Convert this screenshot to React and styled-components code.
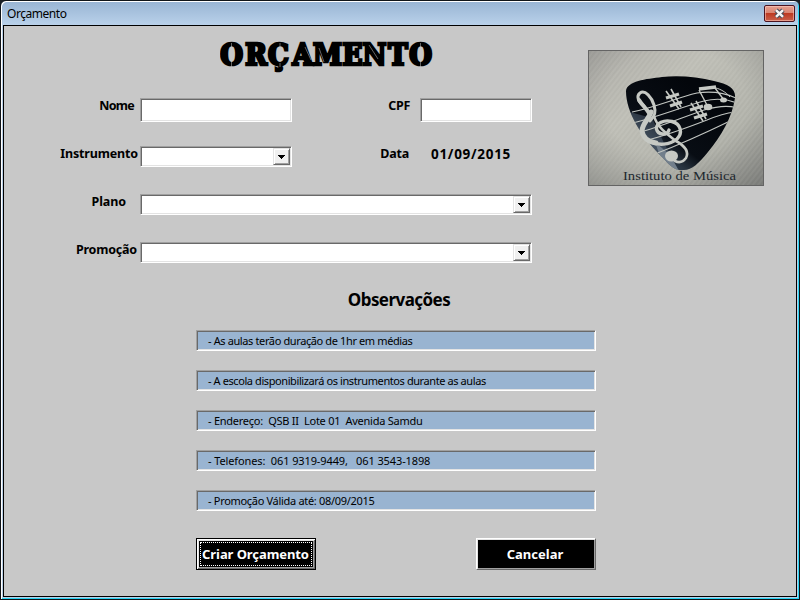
import React from "react";
import styled, { createGlobalStyle, css } from "styled-components";

const GlobalStyle = createGlobalStyle`
  *, *::before, *::after { box-sizing: border-box; }
  body { margin: 0; background: #1a1f24; overflow: hidden; }
`;

const sunken = css`
  border: 1px solid;
  border-color: #a0a0a0 #fff #fff #a0a0a0;
  box-shadow: inset 1px 1px 0 #696969, inset -1px -1px 0 #e3e3e3;
`;

const Window = styled.div`
  width: 800px;
  height: 600px;
  display: flex;
  flex-direction: column;
  padding: 1px 2px 2px 2px;
  border: 1px solid #101418;
  border-radius: 6px 6px 0 0;
  background: linear-gradient(#98b4d3 0, #b9d1ea 24px, #b9d1ea 100%);
  box-shadow: inset 1px 1px 0 #fff, inset -1px -1px 0 #28d4f2;
  font-family: "Noto Sans", sans-serif;
  color: #000;
`;

const TitleBar = styled.header`
  height: 23px;
  display: flex;
  justify-content: space-between;
  padding: 3px 2px 0 4px;
`;

const WindowTitle = styled.span`
  font-size: 12px;
  line-height: 17px;
  letter-spacing: -0.45px;
`;

const CloseButton = styled.button`
  width: 31px;
  height: 17px;
  padding: 0;
  display: flex;
  align-items: center;
  justify-content: center;
  border: 1px solid #4b1420;
  border-radius: 2px;
  background: linear-gradient(#e5a090 0, #d98370 48%, #bd3a22 50%, #c9604b 100%);
  box-shadow: inset 0 0 0 1px rgba(255, 205, 195, 0.55);
`;

const Client = styled.main`
  height: 572px;
  display: flex;
  flex-direction: column;
  border: 1px solid #000;
  background: #c8c8c8;
`;

const Top = styled.div`
  display: flex;
  height: 262px;
`;

const FormColumn = styled.div`
  width: 584px;
`;

const Heading = styled.h1`
  width: 214px;
  height: 72px;
  margin: 0 0 0 216px;

  svg { display: block; }

  text {
    font: 700 29px "DejaVu Serif", serif;
    font-stretch: condensed;
    text-anchor: middle;
    stroke: #000;
    stroke-width: 2.7px;
  }
`;

const FormRow = styled.div`
  display: flex;
  height: 48px;
  align-items: flex-start;
`;

const Label = styled.label`
  width: ${(p) => p.$width}px;
  padding-right: ${(p) => p.$gap}px;
  display: flex;
  justify-content: flex-end;
  font-size: 12.5px;
  line-height: 15px;
  font-weight: 700;
  letter-spacing: ${(p) => p.$track || 0}px;
  white-space: nowrap;
`;

const Input = styled.input`
  ${sunken}
  width: ${(p) => p.$width}px;
  height: 24px;
  padding: 2px 4px;
  border-radius: 0;
  background: #fff;
  font: inherit;
  outline: 0;
`;

const SelectBox = styled.div`
  ${sunken}
  display: flex;
  justify-content: flex-end;
  width: ${(p) => p.$width}px;
  height: 21px;
  padding: 1px;
  background: #fff;
`;

const Arrow = styled.button`
  width: 17px;
  height: 17px;
  padding: 1px 0 0;
  display: flex;
  align-items: center;
  justify-content: center;
  border: 1px solid;
  border-color: #e3e3e3 #696969 #696969 #e3e3e3;
  background: #f0f0f0;
  box-shadow: inset 1px 1px 0 #fff, inset -1px -1px 0 #a0a0a0;
`;

const DateValue = styled.span`
  margin-left: 22px;
  font-size: 13.5px;
  line-height: 17px;
  font-weight: 700;
  letter-spacing: 0.7px;
`;

const Picture = styled.figure`
  width: 176px;
  height: 136px;
  margin: 24px 0 0;
  border: 1px solid #646464;
  overflow: hidden;

  svg { display: block; }
`;

const Notes = styled.section`
  width: 400px;
  margin-left: 192px;
`;

const NotesTitle = styled.h2`
  height: 42px;
  margin: 0;
  padding-left: 6px;
  text-align: center;
  font-size: 17px;
  line-height: 24px;
  letter-spacing: -0.55px;
`;

const Note = styled.div`
  ${sunken}
  height: 21px;
  margin-bottom: 19px;
  padding-left: 11px;
  background: #99b4d1;
  font-size: 11px;
  line-height: 20px;
  white-space: pre;
  letter-spacing: ${(p) => p.$track}px;
`;

const Actions = styled.div`
  display: flex;
  justify-content: space-between;
  margin-top: 27px;
`;

const ActionButton = styled.button`
  width: 120px;
  height: 32px;
  padding: 0 2px 0 0;
  border: 1px solid;
  border-color: #fff #696969 #696969 #fff;
  border-radius: 0;
  background: #000;
  box-shadow: inset 1px 1px 0 #e3e3e3, inset -1px -1px 0 #a0a0a0;
  color: #fff;
  font: 700 13px/18px "Noto Sans", sans-serif;
  letter-spacing: ${(p) => p.$track}px;
  white-space: nowrap;
  ${(p) =>
    p.$focused &&
    css`
      padding-right: 1px;
      border-color: #000;
      box-shadow: inset 1px 1px 0 #fff, inset -1px -1px 0 #696969,
        inset 2px 2px 0 #e3e3e3, inset -2px -2px 0 #a0a0a0;
      outline: 1px dotted #fff;
      outline-offset: -5px;
    `}
`;

function Select({ width }) {
  return (
    <SelectBox $width={width}>
      <Arrow aria-label="Abrir lista">
        <svg width="7" height="4" shapeRendering="crispEdges">
          <path d="M0 0h7v1h-1v1h-1v1h-1v1h-1v-1h-1v-1h-1v-1h-1z" />
        </svg>
      </Arrow>
    </SelectBox>
  );
}

function StencilTitle() {
  return (
    <Heading>
      <svg width="214" height="72">
        <text x="11.5 36 58.5 82.5 107.5 132.5 154.5 178 200.5" y="39">
          ORÇAMENTO
        </text>
        <path
          d="M11.5 17V41M200.500 17V41M60 17V21M60 37V41M85 21L91 34M99 22L104 36M149 19L158 33"
          stroke="#c8c8c8"
          strokeWidth="0.5"
          fill="none"
        />
      </svg>
    </Heading>
  );
}

function Logo() {
  return (
    <svg width="174" height="134" viewBox="1 1 174 134">
      <defs>
        <linearGradient id="wall" x1="0" y1="0" x2="1" y2="1">
          <stop offset="0" stopColor="#aaa9a4" />
          <stop offset="0.35" stopColor="#bdbdb5" />
          <stop offset="0.7" stopColor="#b0b1a9" />
          <stop offset="1" stopColor="#8a8b86" />
        </linearGradient>
        <radialGradient id="shade" cx="0.5" cy="0.4" r="0.8">
          <stop offset="0.5" stopColor="#777" stopOpacity="0" />
          <stop offset="1" stopColor="#5c5e5e" stopOpacity="0.45" />
        </radialGradient>
        <pattern id="grain" width="4" height="4" patternUnits="userSpaceOnUse" patternTransform="rotate(38)">
          <rect width="2" height="4" fill="#e0dfd6" opacity="0.13" />
        </pattern>
        <linearGradient id="pickFill" x1="0" y1="1" x2="0.7" y2="0.2">
          <stop offset="0" stopColor="#526174" />
          <stop offset="0.35" stopColor="#283440" />
          <stop offset="0.5" stopColor="#080d14" />
          <stop offset="1" stopColor="#03060b" />
        </linearGradient>
        <clipPath id="pick">
          <path d="M38 41C39 31 58 29 74 27C91 25 110 27 126 31C141 34 148 39 147 48C144 68 133 86 120 102C111 113 104 120 96 120C87 121 82 116 75 108C54 87 38 63 38 41Z" />
        </clipPath>
      </defs>
      <rect width="176" height="136" fill="url(#wall)" />
      <rect width="176" height="136" fill="url(#grain)" />
      <rect width="176" height="136" fill="url(#shade)" />
      <g clipPath="url(#pick)">
        <rect x="36" y="24" width="114" height="98" fill="url(#pickFill)" />
        <path d="M38 61L64 68L76 93L91 121H60Z" fill="#66778b" opacity="0.4" />
        <path d="M67 92L82 105L91 121H77Z" fill="#a2adb7" opacity="0.5" />
        <g fill="none" stroke="#c1c5c1" strokeWidth="1.1">
          <path d="M44 62C68 57 88 48 109 43C123 41 137 43 148 48" />
          <path d="M45 73C72 66 94 57 116 51C128 48 139 49 149 53" />
          <path d="M49 83C72 77 93 68 116 60C130 56 140 55 149 58" />
          <path d="M56 91C80 85 101 77 119 70C131 65 139 63 147 62" />
          <path d="M67 104C88 96 109 87 142 71" />
        </g>
      </g>
      <g fill="none" stroke="#c6c9c4" strokeLinecap="round">
        <path d="M56 56C50 52 48 46 52 43C57 39 64 48 66 55C68 62 67 66 62 71" strokeWidth="3" />
        <path d="M51 50C54 55 58 58 61 63" strokeWidth="4" />
        <path d="M63 62C61 69 54 74 54 81C55 88 61 92 68 93" strokeWidth="5" />
        <path d="M60 91C70 96 82 95 89 89C95 83 93 74 84 71.5C76 69.5 68 73 68.5 79C70 85 79 86 81 80" strokeWidth="3.4" />
        <path d="M66 66C69 77 79 84 88 91C97 96 101 102 98 108C95 112 91 113 87 111" strokeWidth="2.6" />
      </g>
      <ellipse cx="83.5" cy="106" rx="6.5" ry="5.5" fill="#c6c9c4" />
      <g stroke="#c6c9c4" fill="none">
        <path d="M78 41L91 59M83 39L93 57" strokeWidth="1.6" />
        <path d="M78 48L91 44M82 56L94 52" strokeWidth="3.4" />
        <path d="M103 53L115 71M108 51L118 69" strokeWidth="1.6" />
        <path d="M102 60L115 56M106 68L119 64" strokeWidth="3.4" />
        <path d="M111 40L120 57M127 38L136 50" strokeWidth="1.4" />
        <path d="M111 39L128 37" strokeWidth="3.4" />
        <path d="M128 38C132 39 138 42 142 47" strokeWidth="1" />
      </g>
      <ellipse cx="120" cy="57" rx="4.3" ry="3.2" fill="#c6c9c4" />
      <ellipse cx="135.5" cy="50" rx="3.5" ry="2.5" fill="#c6c9c4" />
      <text x="35" y="129.5" fontFamily="Liberation Serif, serif" fontSize="11.5" fill="#20272e" textLength="113" lengthAdjust="spacingAndGlyphs">
        Instituto de Música
      </text>
    </svg>
  );
}

const notes = [
  { text: "- As aulas terão duração de 1hr em médias", track: -0.38 },
  { text: "- A escola disponibilizará os instrumentos durante as aulas", track: -0.41 },
  { text: "- Endereço:  QSB II  Lote 01  Avenida Samdu", track: -0.25 },
  { text: "- Telefones:  061 9319-9449,   061 3543-1898", track: -0.11 },
  { text: "- Promoção Válida até: 08/09/2015", track: -0.31 },
];

export default function App() {
  return (
    <>
      <GlobalStyle />
      <Window>
        <TitleBar>
          <WindowTitle>Orçamento</WindowTitle>
          <CloseButton aria-label="Fechar">
            <svg width="13" height="11" viewBox="0 0 13 11">
              <path d="M3 2.2L10 8.8M10 2.2L3 8.8" stroke="#484c57" strokeWidth="4.6" />
              <path d="M3 2.2L10 8.8M10 2.2L3 8.8" stroke="#f5f5f5" strokeWidth="2.5" />
            </svg>
          </CloseButton>
        </TitleBar>
        <Client>
          <Top>
            <FormColumn>
              <StencilTitle />
              <FormRow>
                <Label $width={136} $gap={6} $track={-0.7}>Nome</Label>
                <Input $width={152} />
                <Label $width={128} $gap={10} $track={-0.3}>CPF</Label>
                <Input $width={112} />
              </FormRow>
              <FormRow>
                <Label $width={136} $gap={2} $track={-0.15}>Instrumento</Label>
                <Select width={152} />
                <Label $width={117} $gap={0} $track={-0.2}>Data</Label>
                <DateValue>01/09/2015</DateValue>
              </FormRow>
              <FormRow>
                <Label $width={136} $gap={14} $track={-0.1}>Plano</Label>
                <Select width={392} />
              </FormRow>
              <FormRow>
                <Label $width={136} $gap={3} $track={-0.2}>Promoção</Label>
                <Select width={392} />
              </FormRow>
            </FormColumn>
            <Picture>
              <Logo />
            </Picture>
          </Top>
          <Notes>
            <NotesTitle>Observações</NotesTitle>
            {notes.map((n) => (
              <Note key={n.text} $track={n.track}>{n.text}</Note>
            ))}
            <Actions>
              <ActionButton $focused $track={-0.08}>Criar Orçamento</ActionButton>
              <ActionButton $track={0}>Cancelar</ActionButton>
            </Actions>
          </Notes>
        </Client>
      </Window>
    </>
  );
}
